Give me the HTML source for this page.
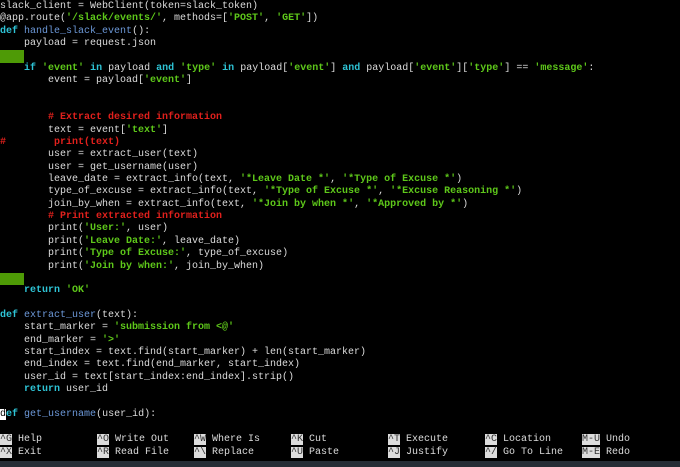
<!DOCTYPE html>
<html><head><style>
body{margin:0;background:#000;width:680px;height:467px;overflow:hidden;position:relative}
pre{margin:0;font-family:"Liberation Mono",monospace;font-size:10px;line-height:12.36px;color:#dcdcdc;white-space:pre;position:absolute;left:0;top:1px}
.s{color:#5ec81a;font-weight:bold}
.k{color:#2ec4d6;font-weight:bold}
.f{color:#6c98d8}
.c{color:#e0201c;font-weight:bold}
.g{background:#4e9a06;display:inline-block;width:24px;height:12.36px;vertical-align:top}
.cur{background:#fff;color:#000}
.m{position:absolute;font-family:"Liberation Mono",monospace;font-size:10px;line-height:12.8px;color:#dcdcdc;white-space:pre}
.m b{font-weight:normal;background:#dcdcdc;color:#333}
.bar{position:absolute;left:0;top:461px;width:680px;height:6px;background:#262d36}
</style></head><body>
<pre>slack_client = WebClient(token=slack_token)
@app.route(<span class="s">'/slack/events/'</span>, methods=[<span class="s">'POST'</span>, <span class="s">'GET'</span>])
<span class="k">def</span> <span class="f">handle_slack_event</span>():
    payload = request.json
<span class="g"></span>
    <span class="k">if</span> <span class="s">'event'</span> <span class="k">in</span> payload <span class="k">and</span> <span class="s">'type'</span> <span class="k">in</span> payload[<span class="s">'event'</span>] <span class="k">and</span> payload[<span class="s">'event'</span>][<span class="s">'type'</span>] == <span class="s">'message'</span>:
        event = payload[<span class="s">'event'</span>]


        <span class="c"># Extract desired information</span>
        text = event[<span class="s">'text'</span>]
<span class="c">#        print(text)</span>
        user = extract_user(text)
        user = get_username(user)
        leave_date = extract_info(text, <span class="s">'*Leave Date *'</span>, <span class="s">'*Type of Excuse *'</span>)
        type_of_excuse = extract_info(text, <span class="s">'*Type of Excuse *'</span>, <span class="s">'*Excuse Reasoning *'</span>)
        join_by_when = extract_info(text, <span class="s">'*Join by when *'</span>, <span class="s">'*Approved by *'</span>)
        <span class="c"># Print extracted information</span>
        print(<span class="s">'User:'</span>, user)
        print(<span class="s">'Leave Date:'</span>, leave_date)
        print(<span class="s">'Type of Excuse:'</span>, type_of_excuse)
        print(<span class="s">'Join by when:'</span>, join_by_when)
<span class="g"></span>
    <span class="k">return</span> <span class="s">'OK'</span>

<span class="k">def</span> <span class="f">extract_user</span>(text):
    start_marker = <span class="s">'submission from &lt;@'</span>
    end_marker = <span class="s">'&gt;'</span>
    start_index = text.find(start_marker) + len(start_marker)
    end_index = text.find(end_marker, start_index)
    user_id = text[start_index:end_index].strip()
    <span class="k">return</span> user_id

<span class="cur">d</span><span class="k">ef</span> <span class="f">get_username</span>(user_id):</pre>
<div class="m" style="left:0;top:434px"><b>^G</b> Help
<b>^X</b> Exit</div>
<div class="m" style="left:97px;top:434px"><b>^O</b> Write Out
<b>^R</b> Read File</div>
<div class="m" style="left:194px;top:434px"><b>^W</b> Where Is
<b>^\</b> Replace</div>
<div class="m" style="left:291px;top:434px"><b>^K</b> Cut
<b>^U</b> Paste</div>
<div class="m" style="left:388px;top:434px"><b>^T</b> Execute
<b>^J</b> Justify</div>
<div class="m" style="left:485px;top:434px"><b>^C</b> Location
<b>^/</b> Go To Line</div>
<div class="m" style="left:582px;top:434px"><b>M-U</b> Undo
<b>M-E</b> Redo</div>
<div class="bar"></div>
</body></html>
